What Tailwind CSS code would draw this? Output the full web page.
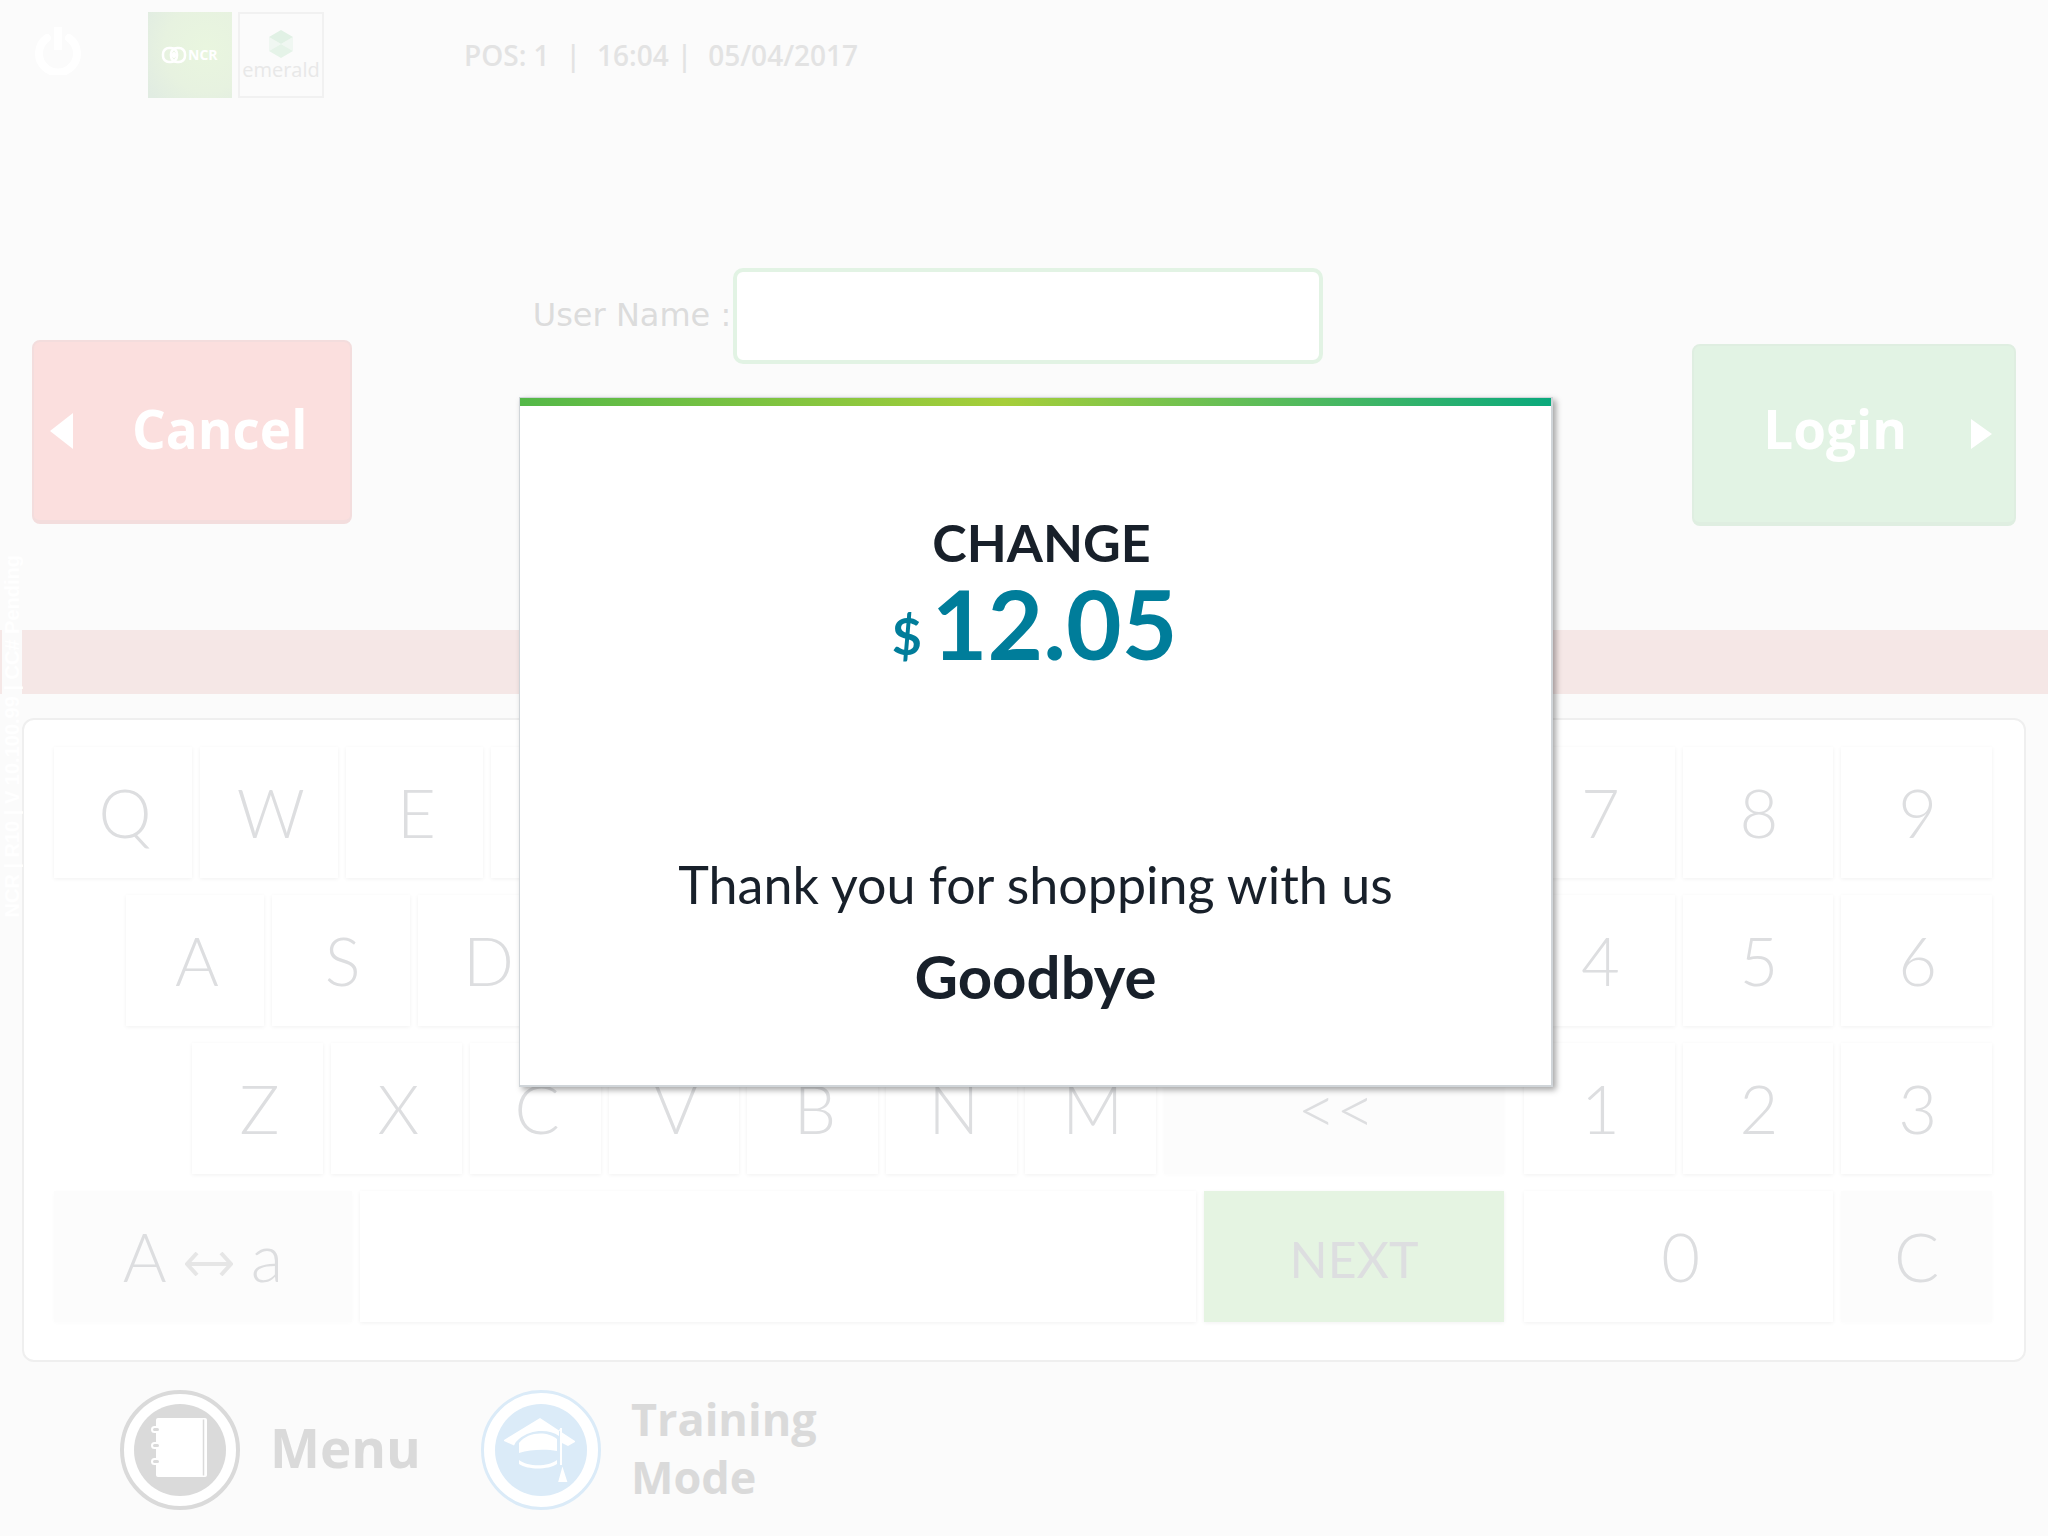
<!DOCTYPE html>
<html lang="en">
<head>
<meta charset="utf-8">
<meta name="viewport" content="width=device-width, initial-scale=1">
<title>POS Login</title>
<script src="https://cdn.jsdelivr.net/npm/@tailwindcss/browser@4"></script>
</head>
<body class="relative min-h-screen overflow-x-hidden bg-[#fbfbfb] font-['Open_Sans','Noto_Sans',sans-serif]">

<header class="flex h-[98px] items-center pt-3 pl-[34px]">
  <button type="button" aria-label="Power" class="mr-[66px] pb-2">
    <svg class="block h-12 w-12" viewBox="0 0 48 48" fill="none" stroke="#ffffff" stroke-linecap="round">
      <path d="M13 11A19 19 0 1 0 35 11" stroke-width="8"/>
      <path d="M24 0V23" stroke-width="8" stroke-linecap="butt"/>
    </svg>
  </button>
  <svg class="mr-1.5 block h-[86px] w-[84px]" viewBox="0 0 84 86" role="img" aria-label="NCR">
    <defs>
      <radialGradient id="ncr" cx="0.7" cy="0.42" r="0.85">
        <stop offset="0" stop-color="#e9f6df"/><stop offset="0.6" stop-color="#e7f2e0"/><stop offset="1" stop-color="#e1ece2"/>
      </radialGradient>
    </defs>
    <rect width="84" height="86" fill="url(#ncr)"/>
    <g fill="none" stroke="#fff" stroke-width="2.500">
      <rect x="15" y="36" width="14" height="14" rx="6"/>
      <rect x="23" y="36" width="14" height="14" rx="6"/>
    </g>
    <path d="M26 39.500l3.500 3.500-3.500 3.500-3.500-3.500z" fill="#fff"/>
    <text x="40" y="48" font-size="14" font-weight="700" fill="#fff">NCR</text>
  </svg>
  <div class="flex h-[86px] w-[86px] flex-col items-center border-2 border-[#f1f1f1] pt-4">
    <svg class="block h-7 w-6" viewBox="0 0 24 28">
      <path d="M0 7V21L12 14L24 21V7L12 14Z" fill="#f0f7f2"/>
      <path d="M12 0L24 7L12 14L0 7Z" fill="#e1f1e5"/>
      <path d="M12 14L24 21L12 28L0 21Z" fill="#e5f3e8"/>
    </svg>
    <span class="text-[20px] leading-6 text-[#e8e8e8]">emerald</span>
  </div>
  <p class="ml-[140px] flex text-[28px] font-semibold leading-9 text-[#e3e3e3]">
    <span>POS: 1</span><span class="mx-4">|</span><span>16:04</span><span class="ml-2 mr-4">|</span><span>05/04/2017</span>
  </p>
</header>

<main>
  <form class="mt-[170px] flex items-start justify-between px-8">
    <button type="button" class="mt-[72px] flex h-[184px] w-[320px] shrink-0 items-center rounded-lg border-2 border-b-4 border-[#f3dddd] bg-[#fbdfde] pl-4 text-[53px] font-bold leading-none text-white">
      <svg class="mr-[58px] block h-9 w-6" viewBox="0 0 24 36"><path d="M0 18L23 0V36Z" fill="#fff"/></svg>
      <span class="pb-1.5">Cancel</span>
    </button>
    <div class="mr-[188px] flex items-center gap-0.5">
      <label for="user" class="whitespace-nowrap pb-0.5 font-['DejaVu_Sans',sans-serif] text-[32px] leading-10 text-[#dcdcdc]">User Name :</label>
      <input id="user" type="text" class="h-24 w-[590px] rounded-[10px] border-4 border-[#e2f3e4] bg-white px-4 text-[32px]">
    </div>
    <button type="submit" class="mt-[76px] flex h-[182px] w-[324px] shrink-0 items-center justify-end rounded-lg border-2 border-b-4 border-[#dfeee1] bg-[#e2f3e4] pr-[22px] text-[53px] font-bold leading-none text-white">
      <span class="pb-3">Login</span>
      <svg class="ml-[64px] block h-[30px] w-[21px]" viewBox="0 0 21 30"><path d="M0 0L21 15L0 30Z" fill="#fff"/></svg>
    </button>
  </form>

  <div class="mt-[104px] h-16 bg-[#f5e7e6]"></div>

  <!-- On-screen keyboard -->
  <section aria-label="Keyboard" class="mx-[22px] mt-6 flex gap-5 rounded-xl border-2 border-[#efefef] bg-white pt-[27px] pr-8 pb-[38px] pl-[30px] font-['Lato',sans-serif] text-[67px] font-light leading-none text-[#dddee0]">
    <div id="letters" class="flex min-w-0 flex-[1450] flex-col gap-[17px]"></div>
    <div id="digits" class="grid min-w-0 flex-[468] grid-cols-3 gap-x-2 gap-y-[17px]"></div>
  </section>
</main>

<footer class="mt-7 flex items-center pl-[120px] font-bold text-[#dadada]">
  <a href="#menu" class="flex items-center gap-[30px] text-[53px] leading-[58px]">
    <svg class="block h-[120px] w-[120px]" viewBox="0 0 120 120">
      <circle cx="60" cy="60" r="58" fill="#fff" stroke="#dadada" stroke-width="4"/>
      <circle cx="60" cy="60" r="46" fill="#dadada"/>
      <rect x="36" y="28" width="51" height="59" rx="2" fill="#fff"/>
      <path d="M83.500 29.500V85.500" stroke="#dadada" stroke-width="1.500"/>
      <g fill="#dadada" stroke="#fff" stroke-width="2">
        <rect x="32" y="37" width="8" height="5" rx="2.500"/><rect x="32" y="53" width="8" height="5" rx="2.500"/><rect x="32" y="69" width="8" height="5" rx="2.500"/>
      </g>
    </svg>
    <span class="pb-1">Menu</span>
  </a>
  <a href="#training" class="ml-[60px] flex items-center gap-[30px] text-[45px] leading-[58px]">
    <svg class="block h-[120px] w-[120px]" viewBox="0 0 120 120">
      <circle cx="60" cy="60" r="58.500" fill="#fff" stroke="#dbebf8" stroke-width="3"/>
      <circle cx="60" cy="60" r="46" fill="#dbebf8"/>
      <path d="M59 28L94 51V52L87 56L80 52.500V41L78 39V46C68 39 50 39 38 49Q34 52 33 55.500L23 51V50Z" fill="#fff"/>
      <path d="M38 53C47 41 67 41 76 49V61C66 59 50 59 38 63Z" fill="#fff"/>
      <path d="M38 70C47 77 67 77 76 70V74C67 80 47 80 38 74Z" fill="#fff"/>
      <path d="M80 38V75M81.500 80L78.500 91H85Z" fill="#fff" stroke="#fff" stroke-width="2"/>
    </svg>
    <span class="pb-1">Training<br>Mode</span>
  </a>
</footer>

<!-- Version strip along the left edge -->
<p class="absolute top-[555px] left-0.5 w-5 rotate-180 bg-[#fbfbfb] font-['Liberation_Sans',sans-serif] text-[20px] font-bold leading-5 whitespace-nowrap text-white [writing-mode:vertical-rl]">NCR | R10 | V 10.100.99 | CC# Pending</p>

<!-- Change dialog -->
<div class="absolute inset-x-0 top-[397px] flex justify-center pl-6">
  <div role="dialog" aria-label="Change" class="w-[1034px] max-w-full border border-r-2 border-b-2 border-[#d0d5d9] bg-white pb-[73px] text-center font-['Lato',sans-serif] text-[#18202a] shadow-[3px_3px_6px_rgba(0,0,0,0.35)]">
    <div class="h-2 bg-[linear-gradient(90deg,#54b848,#a6ce39_47%,#0aa97c)]"></div>
    <h1 class="mt-[104px] pl-3 text-[52px] font-bold leading-[64px]">CHANGE</h1>
    <p class="flex items-end justify-center gap-2.5 pr-0.5 text-[#007d9a]"><span class="text-[52px] font-bold leading-[74px]">$</span><span class="text-[96px] font-bold leading-[98px]">12.05</span></p>
    <p class="mt-44 text-[52px] leading-[72px]">Thank you for shopping with us</p>
    <p class="mt-5 text-[60px] font-bold leading-[72px]">Goodbye</p>
  </div>
</div>

<script>
  const shadow = 'shadow-[0_1px_4px_rgba(0,0,0,0.06)]';
  const plain = 'h-[131px] min-w-0 bg-white ' + shadow;
  const dim = 'h-[131px] min-w-0 bg-[#fcfcfc] shadow-[0_1px_4px_rgba(0,0,0,0.02)]';
  const key = (label, cls) => `<button type="button" class="${cls}">${label}</button>`;
  const row = (inner, cls) => `<div class="flex gap-2 ${cls}">${inner}</div>`;
  const keys = (s) => [...s].map(c => key(c, plain + ' flex-1 pl-1')).join('');
  const arrow = '<svg class="mt-3.5 block h-6 w-12" viewBox="0 0 48 24" fill="none" stroke="#e6e6e6" stroke-width="4"><path d="M2 12H46M12 1L2 12L12 23M36 1L46 12L36 23"/></svg>';

  document.getElementById('letters').innerHTML =
    row(keys('QWERTYUIOP'), '') +
    row(keys('ASDFGHJKL'), 'pl-[72px] pr-[74px]') +
    row(keys('ZXCVBNM') + key('&lt;&lt;', dim + ' w-[340px] shrink-0 pl-1'), 'pl-[138px]') +
    row(
      key(`<span class="flex items-center justify-center gap-[18px]"><span>A</span>${arrow}<span>a</span></span>`, dim + ' w-[298px] shrink-0') +
      key('', plain + ' flex-1') +
      key('NEXT', 'h-[131px] w-[300px] shrink-0 bg-[#e5f4e2] pt-1 text-[50px] font-normal ' + shadow), '');
  document.getElementById('digits').innerHTML =
    [...'789456123'].map(c => key(c, plain + ' pl-0.5')).join('') +
    key('0', plain + ' col-span-2 pl-1') + key('C', dim);
  document.querySelector('#letters > div:last-child > button:nth-child(2)').setAttribute('aria-label', 'Space');
</script>
</body>
</html>
